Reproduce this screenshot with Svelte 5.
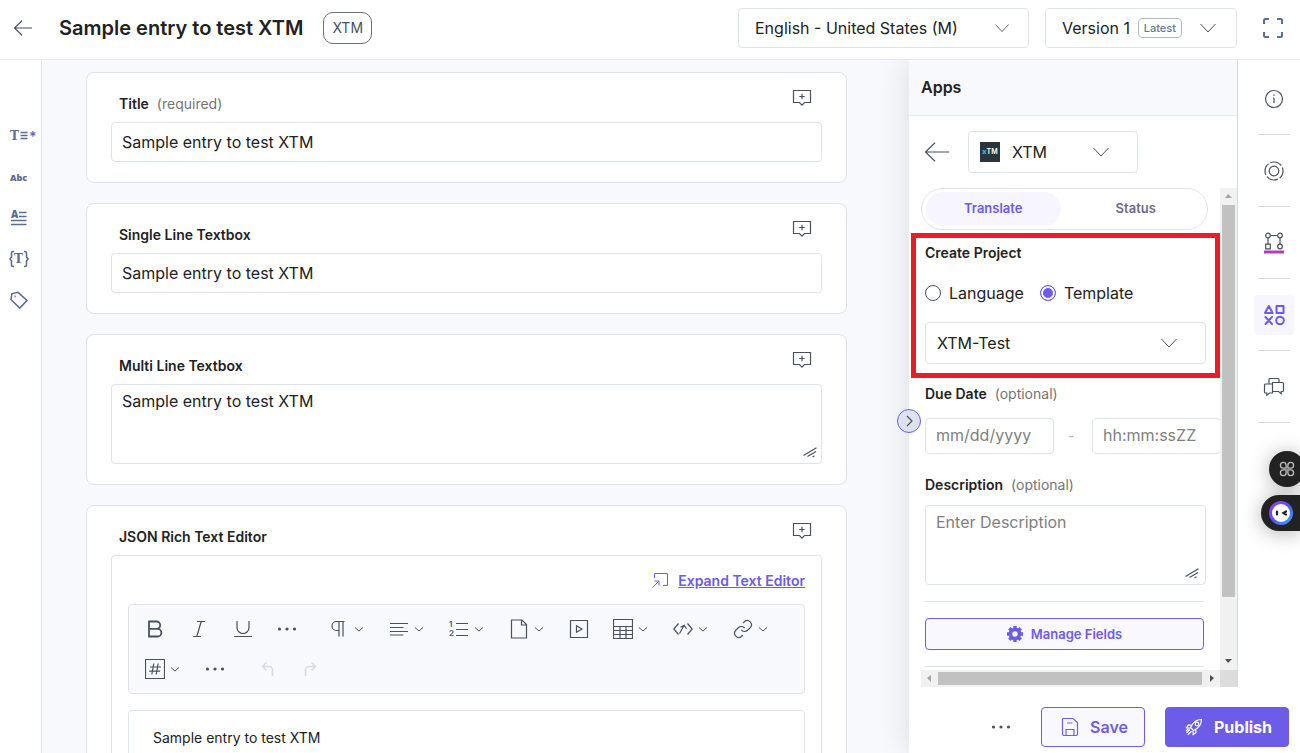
<script>
  let title = $state('Sample entry to test XTM')
  let singleLine = $state('Sample entry to test XTM')
  let multiLine = $state('Sample entry to test XTM')
  let projectType = $state('template')
  let activeTab = $state('Translate')

  const paths = {
    bold: 'M4 2.5h7.5a3.7 3.7 0 0 1 0 7.4H4zM4 9.9h8.6a3.8 3.8 0 0 1 0 7.6H4z',
    italic: 'M8 2.5h8M4 17.5h8M12.2 2.5L7.8 17.5',
    underline: 'M4 2v6.5a6 6 0 0 0 12 0V2M1 17.5h18',
    paragraph: 'M15.5 2.5H7.5a4.5 4.5 0 0 0 0 9H10M10 2.5v15M14 2.5v15',
    align: 'M1 4.5h18M1 8.5h13.5M1 12.5h18M1 16h13.5',
    file: 'M2.5 1h10.5l4.5 4.5V19H2.5zM12.5 1v5h5',
    video: 'M1.5 1.5h17v17h-17zM7.5 6.8l5.5 3.2-5.5 3.2z',
    table: 'M.5 .5h19v19H.5zM.5 7.5h19M.5 11.5h19M.5 15.5h19M7 7.5v12M13 7.5v12',
    embed: 'M5.5 4.5L.8 10l4.7 5.5M14.5 4.5l4.7 5.5-4.7 5.5M6.5 14.5l4.5-8M7.5 8.2l3.7-2 2.3 3.6',
    link: 'M8.3 10.8a4.2 4.2 0 0 0 6.3.5l2.9-2.9a4.2 4.2 0 0 0-5.9-5.9L10.2 4M11.7 9.2a4.2 4.2 0 0 0-6.3-.5l-2.9 2.9a4.2 4.2 0 0 0 5.9 5.9L9.8 16',
    hash: 'M.5 .5h19v19H.5zM8.8 4.5l-2 11M13.2 4.5l-2 11M5 8h11M4.2 12.2h11',
    undo: 'M9.5 3.5l-4 4 4 4M5.5 7.5H12a3.5 3.5 0 0 1 3.5 3.5v6',
    redo: 'M10.5 3.5l4 4-4 4M14.5 7.5H8A3.5 3.5 0 0 0 4.5 11v6'
  }

  const tools = [
    { name: 'bold', label: 'Bold' },
    { name: 'italic', label: 'Italic' },
    { name: 'underline', label: 'Underline' },
    { name: 'more', label: 'More styles' },
    { name: 'paragraph', label: 'Paragraph', menu: true },
    { name: 'align', label: 'Align', menu: true },
    { name: 'list', label: 'List', menu: true },
    { name: 'file', label: 'Asset', menu: true },
    { name: 'video', label: 'Video' },
    { name: 'table', label: 'Table', menu: true },
    { name: 'embed', label: 'Embed entry', menu: true },
    { name: 'link', label: 'Link', menu: true },
    { name: 'hash', label: 'Variables', menu: true },
    { name: 'more', label: 'More tools' },
    { name: 'undo', label: 'Undo', disabled: true },
    { name: 'redo', label: 'Redo', disabled: true }
  ]
</script>

{#snippet chevron()}
  <svg class="chevron" width="18" height="18" viewBox="0 0 18 18"><path d="M1.5 5l7.5 8 7.5-8" /></svg>
{/snippet}

{#snippet dots()}
  <svg class="solid" width="20" height="20" viewBox="0 0 20 20">
    <circle cx="2.5" cy="10" r="1.6" /><circle cx="10" cy="10" r="1.6" /><circle cx="17.5" cy="10" r="1.6" />
  </svg>
{/snippet}

{#snippet resizer()}
  <svg class="resizer" width="14" height="11" viewBox="0 0 14 11"><path d="M.5 8.5L13.5 .8M4.5 9.5l8.5-5M9.5 10l2-1.2" /></svg>
{/snippet}

{#snippet cardHead(id, text, hint)}
  <div class="card-head">
    <label for={id}>{text}{#if hint}<span class="hint">{hint}</span>{/if}</label>
    <button class="plain" aria-label="Add comment">
      <svg width="20" height="18" viewBox="0 0 20 18"><path d="M1.5 1.5h17v12h-6L10 16.2 7.5 13.5h-6zM10 4.8v5.4M7.3 7.5h5.4" /></svg>
    </button>
  </div>
{/snippet}

<div class="app">
  <header class="topbar">
    <button class="plain" aria-label="Back">
      <svg width="20" height="20" viewBox="0 0 20 20"><path d="M19 10H1.5M9 2.8L1.5 10 9 17.2" /></svg>
    </button>
    <h1>Sample entry to test XTM</h1>
    <span class="chip">XTM</span>
    <div class="picker language">
      <select aria-label="Language">
        <option>English - United States (M)</option>
      </select>
      <div class="extras">{@render chevron()}</div>
    </div>
    <div class="picker version">
      <select aria-label="Version">
        <option>Version 1</option>
      </select>
      <div class="extras"><span class="latest">Latest</span>{@render chevron()}</div>
    </div>
    <button class="plain fullscreen" aria-label="Full screen">
      <svg width="22" height="22" viewBox="0 0 22 22"><path d="M2 7V3.5A1.5 1.5 0 0 1 3.5 2H7M15 2h3.5A1.5 1.5 0 0 1 20 3.5V7M20 15v3.5a1.5 1.5 0 0 1-1.5 1.5H15M7 20H3.5A1.5 1.5 0 0 1 2 18.5V15" /></svg>
    </button>
  </header>

  <div class="body">
    <nav class="field-nav" aria-label="Fields">
      <button class="plain" aria-label="Title">
        <svg width="32" height="20" viewBox="0 0 32 20">
          <text class="slab" x="3" y="14" font-size="12">T</text>
          <path d="M13.5 6.5h7M13.5 9.5h7M13.5 12.5h7" />
          <text class="star" x="22" y="16" font-size="14">*</text>
        </svg>
      </button>
      <button class="plain" aria-label="Single Line Textbox">
        <svg width="32" height="20" viewBox="0 0 32 20"><text class="abc" x="3" y="14" font-size="9">Abc</text></svg>
      </button>
      <button class="plain" aria-label="Multi Line Textbox">
        <svg width="32" height="20" viewBox="0 0 32 20">
          <text class="abc" x="4" y="10" font-size="10">A</text>
          <path d="M12 4.5h7.5M12 8.5h7.5M4 12.5h15.5M4 16.5h15.5" />
        </svg>
      </button>
      <button class="plain" aria-label="JSON Rich Text Editor">
        <svg width="32" height="20" viewBox="0 0 32 20">
          <text class="slab" x="7" y="14" font-size="12">T</text>
          <path d="M7 2.5H6A1.5 1.5 0 0 0 4.5 4v4L3 10l1.5 2v4A1.5 1.5 0 0 0 6 17.5h1M17 2.5h1A1.5 1.5 0 0 1 19.5 4v4l1.5 2-1.5 2v4a1.5 1.5 0 0 1-1.5 1.5h-1" />
        </svg>
      </button>
      <button class="plain" aria-label="Tags">
        <svg width="32" height="20" viewBox="0 0 32 20"><path d="M4 9.5L4.8 3.8 11 2.3l9 8.2-7.3 7.5zM7.5 6.4h1.2" /></svg>
      </button>
    </nav>

    <main>
      <section class="card">
        {@render cardHead('title', 'Title', '(required)')}
        <input id="title" class="text" bind:value={title} />
      </section>

      <section class="card">
        {@render cardHead('single', 'Single Line Textbox')}
        <input id="single" class="text" bind:value={singleLine} />
      </section>

      <section class="card">
        {@render cardHead('multi', 'Multi Line Textbox')}
        <div class="area">
          <textarea id="multi" bind:value={multiLine}></textarea>
          {@render resizer()}
        </div>
      </section>

      <section class="card">
        {@render cardHead('json', 'JSON Rich Text Editor')}
        <div class="rte">
          <div class="expand">
            <svg width="18" height="18" viewBox="0 0 18 18"><path d="M3.5 6V1.5h13v12H12M1.5 15.5l6-6M3.5 9h4.5v4.5" /></svg>
            <a href="#json">Expand Text Editor</a>
          </div>
          <div class="toolbar">
            {#each tools as tool}
              <button class="tool {tool.name}" aria-label={tool.label} disabled={tool.disabled}>
                {#if tool.name === 'more'}
                  {@render dots()}
                {:else if tool.name === 'list'}
                  <svg width="20" height="20" viewBox="0 0 20 20">
                    <text class="num" x="0" y="8" font-size="8">1</text>
                    <text class="num" x="0" y="17" font-size="8">2</text>
                    <path d="M7 4.5h12M7 10.5h12M7 16.5h12" />
                  </svg>
                {:else}
                  <svg width="20" height="20" viewBox="0 0 20 20"><path d={paths[tool.name]} /></svg>
                {/if}
                {#if tool.menu}
                  <svg class="caret" width="12" height="12" viewBox="0 0 12 12"><path d="M2 4.5l4 3.5 4-3.5" /></svg>
                {/if}
              </button>
            {/each}
          </div>
          <div id="json" class="editor" contenteditable="true" role="textbox" aria-label="JSON Rich Text Editor" tabindex="0">Sample entry to test XTM</div>
        </div>
      </section>
    </main>

    <aside>
      <div class="columns">
        <div class="apps">
          <h2>Apps</h2>
          <div class="app-row">
            <button class="plain" aria-label="Back to apps">
              <svg width="26" height="22" viewBox="0 0 26 22"><path d="M25 11H1.5M11 1.8L1.5 11 11 20.2" /></svg>
            </button>
            <div class="picker current">
              <select aria-label="App">
                <option>XTM</option>
              </select>
              <div class="extras">
                <span class="logo"><b>x</b>TM</span>
                {@render chevron()}
              </div>
            </div>
          </div>

          <div class="scroller">
            <div class="viewport">
              <div class="tabs" role="tablist">
                {#each ['Translate', 'Status'] as tab}
                  <button role="tab" aria-selected={activeTab === tab} class:active={activeTab === tab} onclick={() => (activeTab = tab)}>{tab}</button>
                {/each}
              </div>
              <form class="project">
                <h3>Create Project</h3>
                <div class="radios">
                  <label><input type="radio" value="language" bind:group={projectType} />Language</label>
                  <label><input type="radio" value="template" bind:group={projectType} />Template</label>
                </div>
                <div class="picker template">
                  <select aria-label="Template">
                    <option>XTM-Test</option>
                  </select>
                  <div class="extras">{@render chevron()}</div>
                </div>
                <label class="field-label" for="due">Due Date<span class="hint">(optional)</span></label>
                <div class="due">
                  <input id="due" placeholder="mm/dd/yyyy" />
                  <span>-</span>
                  <input aria-label="Due time" placeholder="hh:mm:ssZZ" />
                </div>
                <label class="field-label" for="description">Description<span class="hint">(optional)</span></label>
                <div class="area">
                  <textarea id="description" placeholder="Enter Description"></textarea>
                  {@render resizer()}
                </div>
                <div class="manage">
                  <button type="button">
                    <svg width="16" height="16" viewBox="0 0 16 16">
                      <circle cx="8" cy="8" r="4.5" fill="none" stroke-width="3.6" />
                      <path d="M8 0v3M8 13v3M0 8h3M13 8h3M2.3 2.3l2 2M11.7 11.7l2 2M2.3 13.7l2-2M11.7 4.3l2-2" stroke-width="3.4" />
                    </svg>
                    Manage Fields
                  </button>
                </div>
              </form>
            </div>
            <div class="bar vertical">
              <i class="tip up"></i>
              <div class="track"><div class="thumb"></div></div>
              <i class="tip down"></i>
            </div>
            <div class="bar horizontal">
              <i class="tip left"></i>
              <div class="track"><div class="thumb"></div></div>
              <i class="tip right"></i>
            </div>
            <div class="corner"></div>
          </div>
          <div class="highlight"></div>
        </div>

        <nav class="rail" aria-label="Widgets">
          <div class="rail-item">
            <button class="plain" aria-label="Information">
              <svg width="22" height="22" viewBox="0 0 22 22"><circle cx="11" cy="11" r="8.5" /><path d="M11 10v5M11 6.5v1.5M10 10h1" /></svg>
            </button>
          </div>
          <div class="rail-item">
            <button class="plain" aria-label="Live preview">
              <svg width="22" height="22" viewBox="0 0 22 22"><circle cx="11" cy="11" r="4.8" /><circle cx="11" cy="11" r="9" stroke-dasharray="12 2.137" stroke-dashoffset="4" /></svg>
            </button>
          </div>
          <div class="rail-item">
            <button class="plain" aria-label="Workflow">
              <svg width="22" height="22" viewBox="0 0 22 22">
                <circle cx="5" cy="3.5" r="2.3" /><circle cx="17" cy="3.5" r="2.3" /><circle cx="17" cy="14.5" r="2.3" />
                <path d="M2.7 12.2h4.6v4.6H2.7zM5 5.8v6.4M7.3 3.5h7.4M17 5.8v6.4" />
                <path class="stage" d="M1 20h20" />
              </svg>
            </button>
          </div>
          <div class="rail-item active">
            <button class="plain" aria-label="Apps">
              <svg width="22" height="22" viewBox="0 0 22 22"><path d="M5.8 2L9.6 9H2zM13.5 2h7v7h-7zM2.5 13l6.5 7M9 13l-6.5 7" /><circle cx="17" cy="16.5" r="3.8" /></svg>
            </button>
          </div>
          <div class="rail-item">
            <button class="plain" aria-label="Discussions">
              <svg width="22" height="22" viewBox="0 0 22 22"><path d="M6 8V3.5a1 1 0 0 1 1-1h8a1 1 0 0 1 1 1V6.5M9.5 6.5h10a1 1 0 0 1 1 1v7a1 1 0 0 1-1 1h-1.3v2.3L15.5 15.5h-6zM9.5 8H2.5a1 1 0 0 0-1 1v7a1 1 0 0 0 1 1h1.3v2.3L6.5 17h3v-1.5" /></svg>
            </button>
          </div>
        </nav>
      </div>

      <footer>
        <button class="plain" aria-label="More actions">{@render dots()}</button>
        <button class="save">
          <svg width="18" height="20" viewBox="0 0 18 20"><path d="M1.5 2.5A1.5 1.5 0 0 1 3 1.5h9l4.5 4v11.5A1.5 1.5 0 0 1 15 18.5H3A1.5 1.5 0 0 1 1.5 17zM5 18.5v-6h8v6M6 6h5.5" /></svg>
          Save
        </button>
        <button class="publish">
          <svg width="18" height="18" viewBox="0 0 18 18"><path d="M5.5 9.5C7.5 5 11 1.5 16.5 1.5 16.5 7 13 10.5 8.5 12.5zM6.5 7.3L3.5 7 1.5 9.8l4 .2M10.7 11.5l.3 3-2.8 2-.2-4M4.8 11.5L1.5 14.8M6.5 13.2L2.8 16.8M3.5 10.5L1 13" /><circle cx="12" cy="6" r="1.8" /></svg>
          Publish
        </button>
      </footer>
      <button class="collapse" aria-label="Collapse panel">
        <svg width="12" height="12" viewBox="0 0 12 12"><path d="M4 1l5 5-5 5" /></svg>
      </button>
    </aside>
  </div>

  <div class="floating">
    <button class="shortcuts" aria-label="Shortcuts">
      <svg width="16" height="16" viewBox="0 0 18 18"><path d="M8 8H4.8A3.2 3.2 0 1 1 8 4.800zM10 8h3.2A3.2 3.2 0 1 0 10 4.800zM8 10H4.8A3.2 3.2 0 1 0 8 13.200zM10 10h3.2A3.2 3.2 0 1 1 10 13.200z" /></svg>
    </button>
    <button class="assistant" aria-label="Assistant">
      <svg width="24" height="24" viewBox="0 0 24 24">
        <defs>
          <linearGradient id="ring" x1="0" y1="0" x2="1" y2="1">
            <stop offset="0" stop-color="#a03cf0" /><stop offset=".5" stop-color="#5a50f5" /><stop offset="1" stop-color="#25b8e8" />
          </linearGradient>
        </defs>
        <circle cx="12" cy="12" r="12" fill="url(#ring)" />
        <circle cx="12" cy="12" r="9" fill="#fff" />
        <path d="M8 10.500v3M17 10.500l-2.500 1.500 2.500 1.500" fill="none" stroke="#222" stroke-width="2.200" stroke-linecap="round" />
      </svg>
    </button>
  </div>
</div>

<style>
:global(body) {
    margin: 0;
}

.app {
    display: flex;
    flex-direction: column;
    height: 100vh;
    overflow: hidden;
    background: #fff;
    color: #222;
    font: 16px/20px Inter, sans-serif;
}

.app * {
    box-sizing: border-box;
}

button, input, select, textarea {
    margin: 0;
    font: inherit;
    color: inherit;
}

button {
    display: flex;
    align-items: center;
    justify-content: center;
    cursor: pointer;
}

svg {
    flex: none;
    display: block;
    fill: none;
    stroke: #475161;
    stroke-width: 1.2;
}

svg text {
    stroke: none;
    fill: #5a6e91;
}

.chevron, .caret {
    stroke-width: 1;
}

.solid {
    fill: #475161;
    stroke: none;
}

.plain {
    padding: 0;
    border: 0;
    background: none;
}

h1, h2, h3 {
    margin: 0;
    font-weight: 600;
}

.topbar {
    display: flex;
    align-items: center;
    flex: none;
    height: 60px;
    padding: 0 16px 4px 13px;
    border-bottom: 1px solid #e9ecf3;
}

h1 {
    margin: 0 20px 0 26px;
    font-size: 20px;
    line-height: 24px;
    white-space: nowrap;
}

.chip {
    padding: 5px 8px;
    border: 1px solid #6b6f78;
    border-radius: 10px;
    color: #475161;
    font-size: 14px;
}

.picker {
    display: grid;
    height: 42px;
    border: 1px solid #dde3ee;
    border-radius: 4px;
    background: #fff;
}

.picker > * {
    grid-area: 1 / 1;
}

.picker select {
    appearance: none;
    min-width: 0;
    padding: 0 11px;
    border: 0;
    background: none;
}

.extras {
    display: flex;
    align-items: center;
    justify-content: flex-end;
    padding-right: 27px;
    pointer-events: none;
}

.language, .version {
    height: 40px;
}

.language select, .version select {
    padding: 0 16px;
}

.language {
    width: 291px;
    margin-left: auto;
}

.language .extras {
    padding-right: 18px;
}

.language .chevron {
    width: 16px;
}

.version {
    width: 192px;
    margin: 0 25px 0 16px;
}

.version .extras {
    gap: 17px;
    padding-right: 19px;
}

.latest {
    padding: 0 5px;
    border: 1px solid #a9b6cb;
    border-radius: 4px;
    color: #647696;
    font-size: 11px;
    font-weight: 500;
    line-height: 18px;
}

.fullscreen svg {
    stroke: #5a6e91;
    stroke-width: 2;
}

.body {
    display: flex;
    flex: 1;
    min-height: 0;
    overflow: hidden;
}

.field-nav {
    display: flex;
    flex-direction: column;
    gap: 21px;
    flex: none;
    width: 42px;
    padding: 66px 0 0 7px;
    border-right: 1px solid #dde3ee;
}

.field-nav button {
    width: 32px;
    height: 20px;
}

.field-nav svg {
    stroke: #5a6e91;
    stroke-width: 1.6;
}

.slab {
    font-family: "DejaVu Serif", serif;
    font-weight: 700;
}

.abc {
    font-family: "Open Sans", sans-serif;
    font-weight: 800;
}

svg .star {
    fill: #6c5ce7;
    font-weight: 600;
}

main {
    display: flex;
    flex-direction: column;
    gap: 20px;
    flex: 1;
    min-width: 0;
    padding: 12px 62px 0 44px;
    overflow: hidden;
    background: #f7f9fc;
}

.card {
    flex: none;
    padding: 0 24px 20px;
    border: 1px solid #dde3ee;
    border-radius: 8px;
    background: #fff;
}

.card-head {
    display: flex;
    align-items: flex-start;
    justify-content: space-between;
    height: 49px;
    padding: 16px 10px 0 8px;
}

.card-head label {
    padding-top: 5px;
}

.card-head label, .field-label, h3 {
    display: block;
    font-size: 14px;
    font-weight: 600;
    line-height: 20px;
}

.hint {
    margin-left: 8px;
    color: #757575;
    font-weight: 400;
}

.text, textarea, .due input {
    display: block;
    width: 100%;
    height: 40px;
    padding: 0 10px;
    border: 1px solid #dde3ee;
    border-radius: 4px;
    background: #fff;
    outline: 0;
}

.area {
    position: relative;
}

textarea {
    height: 80px;
    padding: 6px 10px;
    resize: none;
}

::placeholder {
    color: #808080;
    opacity: 1;
}

.resizer {
    position: absolute;
    right: 5px;
    bottom: 6px;
}

.rte {
    padding: 0 16px 16px;
    border: 1px solid #dde3ee;
    border-radius: 4px;
}

.expand {
    display: flex;
    align-items: center;
    justify-content: flex-end;
    gap: 9px;
    height: 48px;
    padding-top: 2px;
    font-size: 14px;
    font-weight: 600;
}

.expand a {
    color: #6c5ce7;
}

.expand svg {
    stroke: #6c5ce7;
    stroke-width: 1;
}

.toolbar {
    display: flex;
    flex-wrap: wrap;
    padding: 4px;
    border: 1px solid #dde3ee;
    border-radius: 4px;
    background: #f7f9fc;
}

.tool {
    gap: 4px;
    height: 40px;
    padding: 0 12px;
    border: 0;
    background: none;
}

.tool.more {
    margin-right: 8px;
}

.tool.bold svg {
    stroke-width: 1.8;
}

.tool:disabled svg {
    stroke: #d5dbe7;
    stroke-width: 1.6;
}

svg .num {
    fill: #475161;
    font-weight: 600;
}

.editor {
    height: 200px;
    margin-top: 16px;
    padding: 17px 24px;
    border: 1px solid #dde3ee;
    border-radius: 4px;
    font-size: 14px;
    outline: 0;
}

aside {
    position: relative;
    display: flex;
    flex-direction: column;
    flex: none;
    width: 391px;
    background: #fff;
    box-shadow: 0 0 30px rgba(34, 34, 34, 0.14);
}

.columns {
    display: flex;
    flex: 1;
    min-height: 0;
}

.apps {
    position: relative;
    display: flex;
    flex-direction: column;
    flex: 1;
    min-width: 0;
    border-right: 1px solid #d4d8df;
}

h2 {
    padding: 17px 12px 18px;
    border-bottom: 1px solid #e9ecf3;
    background: #f7f9fc;
    font-size: 16px;
}

.app-row {
    display: flex;
    align-items: center;
    gap: 18px;
    padding: 15px;
}

.current {
    width: 170px;
}

.current select {
    padding-left: 43px;
}

.current .extras {
    justify-content: space-between;
    padding-left: 11px;
}

.logo {
    width: 20px;
    height: 20px;
    background: #29343f;
    color: #fff;
    font-size: 7px;
    font-weight: 600;
    text-align: center;
}

.logo b {
    color: #28b4e6;
}

.scroller {
    display: grid;
    grid-template: minmax(0, 1fr) 17px / minmax(0, 1fr) 17px;
    flex: 1;
    min-height: 0;
    margin-left: 12px;
}

.viewport {
    overflow: hidden;
}

.tabs {
    display: flex;
    gap: 8px;
    height: 42px;
    margin-right: 12px;
    padding: 3px 4px;
    border: 1px solid #dde3ee;
    border-radius: 21px;
}

.tabs button {
    flex: 1 1 0;
    height: 34px;
    padding: 0 0 2px;
    border: 0;
    border-radius: 17px;
    background: none;
    color: #6e6b86;
    font-size: 13px;
    font-weight: 600;
}

.tabs .active {
    background: #f7f5ff;
    color: #6c5ce7;
}

.project {
    padding: 13px 14px 0 4px;
}

.radios {
    display: flex;
    gap: 16px;
    margin: 20px 0 19px;
}

.radios label {
    display: flex;
    align-items: center;
    gap: 8px;
}

.radios input {
    appearance: none;
    width: 16px;
    height: 16px;
    border: 1px solid #475161;
    border-radius: 50%;
}

.radios input:checked {
    border-color: #6c5ce7;
    background: #6c5ce7;
    box-shadow: inset 0 0 0 2px #fff;
}

.field-label {
    margin-top: 20px;
}

.due {
    display: flex;
    align-items: center;
    margin: 14px 0 21px;
}

.due input {
    flex: none;
    width: 129px;
    height: 36px;
    padding-bottom: 3px;
}

.due span {
    flex: none;
    width: 38px;
    padding-right: 4px;
    color: #a9b6cb;
    font-size: 14px;
    text-align: center;
}

.project .area {
    margin-top: 10px;
}

.project .resizer {
    right: 7px;
}

.manage {
    margin: 16px 2px 0 0;
    padding: 16px 0;
    border: solid #dde3ee;
    border-width: 1px 0;
}

.manage button {
    gap: 8px;
    width: 100%;
    height: 32px;
    border: 1px solid #6c5ce7;
    border-radius: 4px;
    background: #f9f8ff;
    color: #6c5ce7;
    font-size: 13px;
    font-weight: 600;
}

.manage svg {
    stroke: #6c5ce7;
}

.bar {
    display: flex;
    background: #f1f1f1;
}

.vertical {
    flex-direction: column;
}

.track {
    display: flex;
    flex: 1;
}

.thumb {
    background: #c1c1c1;
}

.vertical .thumb {
    width: 13px;
    height: 87.5%;
    margin: 0 2px;
}

.horizontal .thumb {
    width: 99.5%;
    margin: 2px 0;
}

.tip {
    flex: none;
    width: 17px;
    height: 17px;
    background: #505050;
}

.up {
    background: #a3a3a3;
    clip-path: polygon(5px 10px, 12px 10px, 8px 6px);
}

.down {
    clip-path: polygon(5px 6px, 12px 6px, 8px 10px);
}

.left {
    background: #a3a3a3;
    clip-path: polygon(10px 5px, 10px 12px, 6px 8px);
}

.right {
    clip-path: polygon(7px 5px, 7px 12px, 11px 8px);
}

.corner {
    background: #dcdcdc;
}

.highlight {
    position: absolute;
    top: 173px;
    right: 17px;
    left: 2px;
    height: 145px;
    border: 5px solid #ec1c24;
    pointer-events: none;
}

.rail {
    flex: none;
    width: 62px;
    padding: 3px 10px 0 20px;
}

.rail-item {
    display: flex;
    align-items: center;
    justify-content: center;
    height: 72px;
    border-bottom: 1px solid #d3d9e4;
}

.rail-item button {
    flex: none;
    width: 40px;
    height: 40px;
    border-radius: 4px;
}

.active button {
    background: #f7f5ff;
}

.active svg {
    stroke: #6c5ce7;
    stroke-width: 2;
    stroke-linejoin: round;
    stroke-linecap: round;
}

.stage {
    stroke: #b53ac0;
    stroke-width: 3;
}

footer {
    display: flex;
    justify-content: flex-end;
    flex: none;
    gap: 20px;
    padding: 20px 11px 6px;
}

footer .plain {
    margin-right: 10px;
}

.save, .publish {
    gap: 11px;
    height: 40px;
    padding: 0 16px 0 19px;
    border: 1px solid #6c5ce7;
    border-radius: 4px;
    background: #f9f8ff;
    color: #6c5ce7;
    font-weight: 600;
}

.save svg {
    stroke: #6c5ce7;
}

.publish {
    background: #6c5ce7;
    color: #fff;
    font-weight: 700;
}

.publish svg {
    stroke: #fff;
}

.collapse {
    position: absolute;
    top: 349px;
    left: -12px;
    width: 24px;
    height: 24px;
    padding: 0;
    border: 1px solid #6c5ce7;
    border-radius: 50%;
    background: #dde3ee;
}

.floating {
    position: fixed;
    top: 451px;
    right: 0;
    display: flex;
    flex-direction: column;
    align-items: flex-end;
    gap: 8px;
}

.floating button {
    height: 36px;
    padding: 0;
    border: 0;
    background: #222;
    box-shadow: 0 2px 20px rgba(0, 0, 0, 0.3);
}

.shortcuts {
    width: 36px;
    margin-right: -5px;
    border-radius: 50%;
}

.shortcuts svg {
    stroke: #bbb;
    stroke-width: 1.5;
}

.assistant {
    width: 39px;
    border-radius: 18px 0 0 18px;
}

.assistant svg {
    stroke: none;
}
</style>
